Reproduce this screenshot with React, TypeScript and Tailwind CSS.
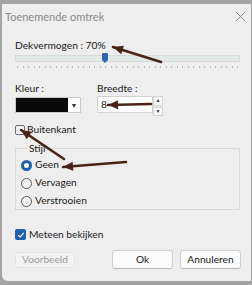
import type { ReactNode } from 'react';

const ARROW_COLOR = '#4a2418';
const TICK_COUNT = 41;

type Pt = [number, number];

// tip first, tail second
const ARROWS: [Pt, Pt][] = [
  [[113, 47], [161, 62]],
  [[108, 105], [151, 104]],
  [[21, 130], [64, 159]],
  [[63, 167], [126, 162]],
];

function arrowHead([tx, ty]: Pt, [sx, sy]: Pt) {
  const dx = tx - sx;
  const dy = ty - sy;
  const len = Math.hypot(dx, dy);
  const ux = dx / len;
  const uy = dy / len;
  const bx = tx - ux * 10;
  const by = ty - uy * 10;
  const px = -uy * 4.5;
  const py = ux * 4.5;
  return `${tx},${ty} ${bx + px},${by + py} ${bx - px},${by - py}`;
}

function Radio({ checked, children }: { checked?: boolean; children: ReactNode }) {
  return (
    <div className="flex items-center gap-[3px] h-[18px]">
      {checked ? (
        <span className="w-[11px] h-[11px] rounded-full bg-[#1d5fb0] flex items-center justify-center">
          <span className="w-[5px] h-[5px] rounded-full bg-white" />
        </span>
      ) : (
        <span className="w-[11px] h-[11px] rounded-full border border-[#5a5a5a] bg-[#f3f3f3]" />
      )}
      <span>{children}</span>
    </div>
  );
}

export default function App() {
  return (
    <div className="relative w-[252px] h-[285px] bg-[#a3a3a3] overflow-hidden font-['Lato',sans-serif] text-[10.2px] text-[#1a1a1a]">
      <div className="mt-[4px] ml-[2px] w-[249px] h-[277px] bg-[#eeeeee] rounded-bl-[6px] flex flex-col">
        {/* titelbalk */}
        <div className="flex items-center justify-between h-[26px] pl-[3px] pr-[5px]">
          <span className="text-[#8a8a8a] text-[11px]">Toenemende omtrek</span>
          <svg width="11" height="11" viewBox="0 0 11 11" className="-mt-[2px]">
            <path d="M1 1 L10 10 M10 1 L1 10" stroke="#8c8c8c" strokeWidth="1" />
          </svg>
        </div>

        <div className="flex flex-col pl-[13px] pr-[10px]">
          {/* dekvermogen */}
          <div className="mt-[9px] leading-[13px]">Dekvermogen : 70%</div>
          <div className="relative mt-[3px] h-[7px] w-[225px] bg-[#e2e9e8] border border-[#d4dbda]">
            <div className="absolute left-[86px] top-[-3px] w-[6px] h-[10px] bg-[#2b66b2] rounded-t-[1px] [clip-path:polygon(0_0,100%_0,100%_70%,50%_100%,0_70%)]" />
          </div>
          <div className="flex justify-between w-[225px] mt-[4px] px-[2px]">
            {Array.from({ length: TICK_COUNT }).map((_, i) => (
              <span key={i} className="w-px h-[2px] bg-[#b8b8b8]" />
            ))}
          </div>

          {/* kleur + breedte */}
          <div className="flex mt-[14px] gap-[16px]">
            <div className="flex flex-col">
              <span className="leading-[12px]">Kleur :</span>
              <div className="mt-[3px] flex h-[16px] w-[66px] border border-[#c9c9c9] bg-white">
                <div className="flex-1 bg-[#0a0a0a]" />
                <div className="w-[12px] flex items-center justify-center text-[7px] text-[#333]">▼</div>
              </div>
            </div>
            <div className="flex flex-col">
              <span className="leading-[12px]">Breedte :</span>
              <div className="mt-[2px] flex h-[17px]">
                <div className="w-[56px] border border-[#d2d2d2] bg-white pl-[3px] leading-[15px]">8</div>
                <div className="flex flex-col w-[10px] gap-px">
                  <div className="flex-1 bg-[#f7f7f7] border border-[#d2d2d2] flex items-center justify-center text-[5px] text-[#333]">▲</div>
                  <div className="flex-1 bg-[#f7f7f7] border border-[#d2d2d2] flex items-center justify-center text-[5px] text-[#333]">▼</div>
                </div>
              </div>
            </div>
          </div>

          {/* buitenkant */}
          <div className="flex items-center gap-[2px] mt-[10px] h-[14px]">
            <span className="w-[10px] h-[10px] rounded-[2px] border border-[#6e6e6e] bg-[#f5f5f5]" />
            <span>Buitenkant</span>
          </div>

          {/* stijl */}
          <fieldset className="mt-[5px] w-[225px] h-[68px] border border-[#d8d8d8] px-[5px]">
            <legend className="ml-[6px] px-[2px] leading-[12px]">Stijl</legend>
            <div className="flex flex-col mt-[2px]">
              <Radio checked>Geen</Radio>
              <Radio>Vervagen</Radio>
              <Radio>Verstrooien</Radio>
            </div>
          </fieldset>

          {/* meteen bekijken */}
          <div className="flex items-center gap-[3px] mt-[18px] h-[13px]">
            <span className="w-[11px] h-[11px] rounded-[2px] bg-[#1d5fb0] flex items-center justify-center">
              <svg width="8" height="8" viewBox="0 0 8 8">
                <path d="M1.2 4.2 L3.2 6 L6.8 1.8" stroke="#fff" strokeWidth="1.2" fill="none" />
              </svg>
            </span>
            <span>Meteen bekijken</span>
          </div>

          {/* knoppen */}
          <div className="flex items-center mt-[9px] w-[226px]">
            <div className="w-[60px] h-[16px] bg-[#f3f3f3] border border-[#e4e4e4] rounded-[3px] text-[#9a9a9a] flex items-center justify-center">
              Voorbeeld
            </div>
            <div className="ml-auto w-[61px] h-[19px] bg-[#fbfbfb] border border-[#d0d0d0] border-b-[#b8b8b8] rounded-[3px] flex items-center justify-center">
              Ok
            </div>
            <div className="ml-[7px] w-[61px] h-[19px] bg-[#fbfbfb] border border-[#d0d0d0] border-b-[#b8b8b8] rounded-[3px] flex items-center justify-center">
              Annuleren
            </div>
          </div>
        </div>
      </div>

      {/* pijlen over de dialoog */}
      <svg className="absolute inset-0 pointer-events-none" width="252" height="285">
        {ARROWS.map(([tip, tail], i) => (
          <g key={i}>
            <line x1={tip[0]} y1={tip[1]} x2={tail[0]} y2={tail[1]} stroke={ARROW_COLOR} strokeWidth="2.6" strokeLinecap="round" />
            <polygon points={arrowHead(tip, tail)} fill={ARROW_COLOR} />
          </g>
        ))}
      </svg>
    </div>
  );
}
